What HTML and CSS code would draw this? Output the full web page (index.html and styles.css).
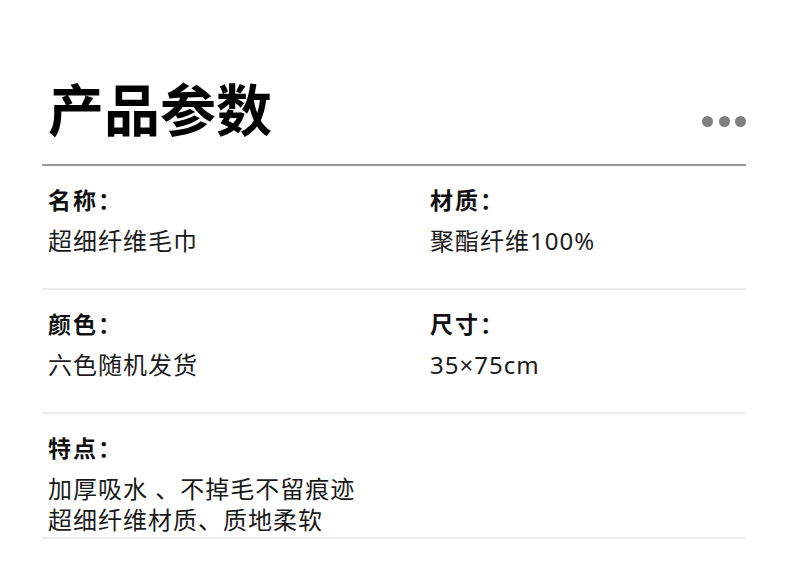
FILE: index.html
```html
<!DOCTYPE html>
<html lang="zh-CN">
<head>
<meta charset="utf-8">
<title>产品参数</title>
<link rel="stylesheet" href="styles.css">
</head>
<body>
<div class="page">
  <header class="header">
    <h1 class="title">产品参数</h1>
    <div class="dots"><span class="dot"></span><span class="dot"></span><span class="dot"></span></div>
  </header>
  <section class="specs">
    <div class="row">
      <div class="cell">
        <div class="label">名称：</div>
        <div class="value">超细纤维毛巾</div>
      </div>
      <div class="cell">
        <div class="label">材质：</div>
        <div class="value">聚酯纤维100%</div>
      </div>
    </div>
    <div class="row">
      <div class="cell">
        <div class="label">颜色：</div>
        <div class="value">六色随机发货</div>
      </div>
      <div class="cell">
        <div class="label">尺寸：</div>
        <div class="value">35×75cm</div>
      </div>
    </div>
    <div class="row row-last">
      <div class="cell cell-wide">
        <div class="label">特点：</div>
        <div class="value">加厚吸水 、不掉毛不留痕迹<br>超细纤维材质、质地柔软</div>
      </div>
    </div>
  </section>
</div>
</body>
</html>
```
FILE: styles.css
```css
* { box-sizing: border-box; }
html, body {
  margin: 0;
  padding: 0;
  background: #ffffff;
}
body {
  font-family: "Noto Sans", "Noto Sans CJK SC", sans-serif;
  color: #111111;
}
.page {
  width: 704px;
  margin-left: 42px;
}
.header {
  display: flex;
  justify-content: space-between;
  align-items: flex-start;
  padding-top: 77px;
  height: 166px;
  border-bottom: 2px solid #9a9a9a;
}
.title {
  margin: 0 0 0 6px;
  font-family: "Noto Sans CJK SC", sans-serif;
  font-size: 56px;
  line-height: 60px;
  font-weight: 700;
  color: #000;
}
.dots {
  display: flex;
  gap: 5.5px;
  margin-top: 39px;
}
.dot {
  width: 11px;
  height: 11px;
  border-radius: 50%;
  background: #7f7f7f;
}
.row {
  display: grid;
  grid-template-columns: 382px 1fr;
  padding: 19px 0 32px;
  border-bottom: 2px solid #ececec;
}
.row-last {
  padding-bottom: 2px;
}
.cell {
  padding-left: 6px;
}
.cell-wide {
  grid-column: 1 / -1;
}
.label {
  font-size: 23px;
  line-height: 30px;
  font-weight: 700;
  letter-spacing: 2px;
}
.value {
  margin-top: 10px;
  font-size: 24px;
  line-height: 31px;
  letter-spacing: 1px;
  color: #1a1a1a;
}
```
